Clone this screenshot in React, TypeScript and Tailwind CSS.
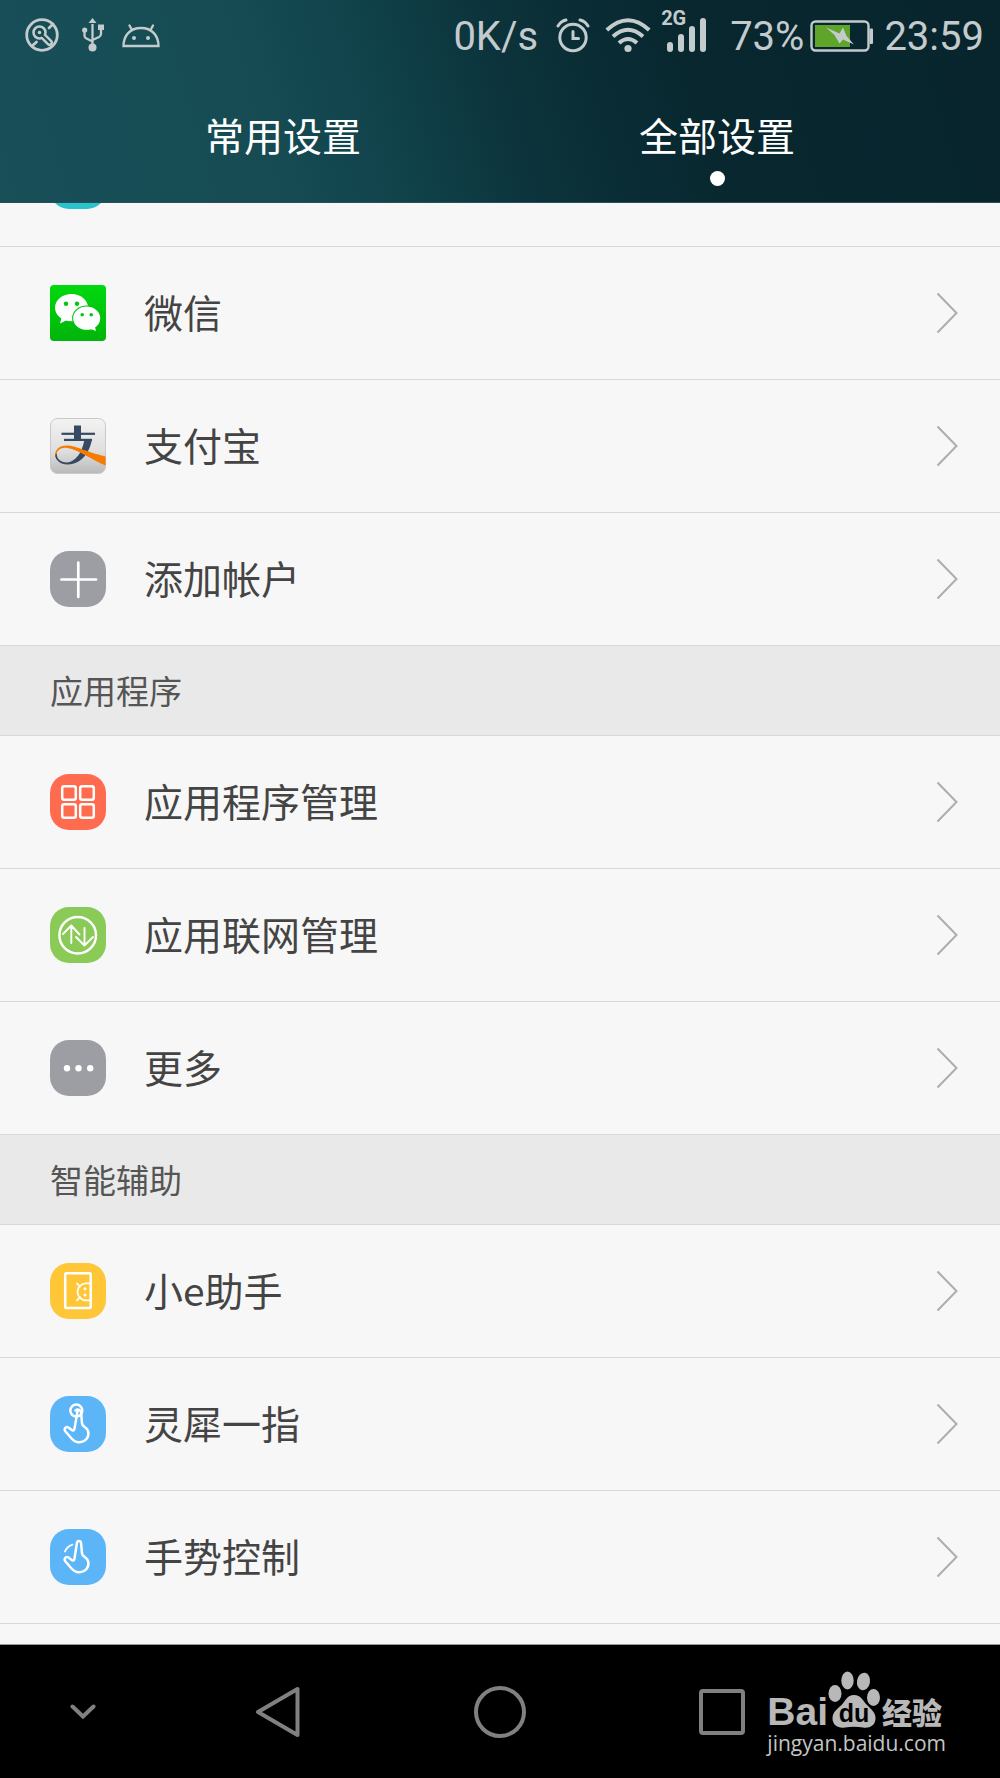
import type { ReactNode } from 'react'

type Row = {
  label: string
  icon: ReactNode
}

type Section = {
  title?: string
  rows: Row[]
}

const Tile = ({ className, children }: { className: string; children?: ReactNode }) => (
  <span className={`${className} size-14 shrink-0 rounded-[19px] overflow-hidden text-white`}>
    <svg viewBox="0 0 56 56" className="size-full" fill="none" stroke="currentColor" strokeWidth="2.5" strokeLinecap="round" strokeLinejoin="round">
      {children}
    </svg>
  </span>
)

const WeChatIcon = () => (
  <svg viewBox="0 0 56 56" className="size-14 shrink-0">
    <defs>
      <linearGradient id="wechat" x1="0" y1="0" x2="0" y2="1">
        <stop offset="0" stopColor="#00d90f" />
        <stop offset="1" stopColor="#00b40b" />
      </linearGradient>
    </defs>
    <rect width="56" height="56" rx="4" fill="url(#wechat)" />
    <path d="M12 31 L10 38.5 L18 34.5 Z" fill="#fff" />
    <ellipse cx="21.5" cy="22.7" rx="16.5" ry="13.6" fill="#fff" />
    <ellipse cx="36.7" cy="33.2" rx="14.6" ry="12.7" fill="#00c20c" />
    <ellipse cx="36.7" cy="33.2" rx="13.5" ry="11.6" fill="#fff" />
    <path d="M39 43.5 L46 46 L44.5 40 Z" fill="#fff" />
    <g fill="#00c80c">
      <circle cx="16" cy="18.8" r="2.2" />
      <circle cx="27" cy="18.8" r="2.2" />
      <circle cx="32.2" cy="29.8" r="1.8" />
      <circle cx="41.2" cy="29.8" r="1.8" />
    </g>
  </svg>
)

const AlipayIcon = () => (
  <svg viewBox="0 0 56 56" className="size-14 shrink-0">
    <defs>
      <linearGradient id="alipay" x1="0" y1="0" x2="0" y2="1">
        <stop offset="0" stopColor="#f3f3f3" />
        <stop offset="0.6" stopColor="#dedede" />
        <stop offset="1" stopColor="#b9b9b9" />
      </linearGradient>
    </defs>
    <rect x="0.5" y="0.5" width="55" height="55" rx="7" fill="url(#alipay)" stroke="#c9c9c9" />
    <g fill="#364a63">
      <rect x="11.5" y="14.7" width="33.5" height="2.2" />
      <rect x="24" y="7.5" width="7" height="14" />
      <rect x="14" y="20.8" width="28" height="2.2" />
      <path d="M34.5 21.5 H42 C40 31 36 38 30 42.5 C23 47.5 12 48 7.5 42.5 C5.5 40 4.5 37.5 5.2 35 L7 35.5 C6.5 38 7.5 40.5 10 42.5 C15 46 22 44.5 26 40 C30.5 36 33 29 34.5 21.5 Z" />
    </g>
    <path d="M5 37.5 C5 31.5 9.5 27.5 16.5 27.5 C26 27.5 35 33.5 55.5 38.5 V47.5 C42 42 29 32 17.5 30 C11 29 7 32 6.3 37 Z" fill="#f57c00" />
  </svg>
)

const handPath = 'L24.5 32.5 Q24 35.5 21.7 34 L18.5 31.5 C15.5 30 13.5 33 15.5 35.5 L22 43 C25 46.5 30 47.3 34 45 C39 42 39.3 36.5 37.3 33.5 C35.5 30.8 32.4 30.5 32 27.5'

const sections: Section[] = [
  {
    rows: [
      { label: '微信', icon: <WeChatIcon /> },
      { label: '支付宝', icon: <AlipayIcon /> },
      {
        label: '添加帐户',
        icon: (
          <Tile className="bg-[#9d9ea4]">
            <path d="M11.5 28.5 H46 M28.3 11.5 V46" strokeWidth="2.7" />
          </Tile>
        ),
      },
    ],
  },
  {
    title: '应用程序',
    rows: [
      {
        label: '应用程序管理',
        icon: (
          <Tile className="bg-[#ff6b4f]">
            <rect x="12.2" y="12.2" width="13.6" height="13.6" rx="2" />
            <rect x="30.2" y="12.2" width="13.6" height="13.6" rx="2" />
            <rect x="12.2" y="30.2" width="13.6" height="13.6" rx="2" />
            <rect x="30.2" y="30.2" width="13.6" height="13.6" rx="2" />
          </Tile>
        ),
      },
      {
        label: '应用联网管理',
        icon: (
          <Tile className="bg-[#8aca57]">
            <circle cx="27.7" cy="28.3" r="18.3" />
            <path d="M21.3 36 V18.5 M13 27 L21.3 18.5 L29.5 27.5 M34.5 21 V38.5 M26 30 L34.5 38.5 L43 30" strokeWidth="1.9" />
          </Tile>
        ),
      },
      {
        label: '更多',
        icon: (
          <Tile className="bg-[#9d9ea4]">
            <g fill="currentColor" stroke="none">
              <circle cx="17" cy="28.3" r="3.2" />
              <circle cx="28.5" cy="28.3" r="3.2" />
              <circle cx="40.2" cy="28.3" r="3.2" />
            </g>
          </Tile>
        ),
      },
    ],
  },
  {
    title: '智能辅助',
    rows: [
      {
        label: '小e助手',
        icon: (
          <Tile className="bg-[#ffc637]">
            <rect x="15.2" y="10.3" width="25.5" height="34.8" rx="1" />
            <path d="M39.5 20.3 H36 A8.5 8.5 0 0 0 36 37.3 H39.5 M27 20.5 L30 23.7 M27 37.3 L30 34" strokeWidth="1.8" />
            <circle cx="35" cy="25.7" r="1.5" fill="currentColor" stroke="none" />
            <circle cx="35" cy="32" r="1.5" fill="currentColor" stroke="none" />
          </Tile>
        ),
      },
      {
        label: '灵犀一指',
        icon: (
          <Tile className="bg-[#5bb5f7]">
            <circle cx="26.3" cy="14.6" r="6" />
            <path d={`M27.5 15.5 ${handPath} L31 15.5 M25.5 14.5 Q28 12.5 30.5 15`} />
          </Tile>
        ),
      },
      {
        label: '手势控制',
        icon: (
          <Tile className="bg-[#5bb5f7]">
            <g transform="translate(0 -3)">
              <path d={`M27 16.5 ${handPath} L31 16.5 C30.5 14.5 27.5 14.5 27 16.5`} />
              <path d="M15 25.5 Q17 20.5 22.5 18.7" strokeWidth="1.8" />
            </g>
          </Tile>
        ),
      },
    ],
  },
]

const StatusBar = () => (
  <div className="flex h-18 items-center justify-between pl-6 pr-4 font-[Roboto,sans-serif] text-[40px] leading-none text-[#c3cbcd]">
    <div className="flex items-center gap-5">
      <svg viewBox="0 0 36 36" className="size-9" fill="none" stroke="currentColor" strokeLinecap="round">
        <circle cx="18" cy="17" r="15.3" strokeWidth="2.8" />
        <path d="M20.5 19.5 L25.5 24.5" strokeWidth="6.8" />
        <circle cx="15.5" cy="14.5" r="6" strokeWidth="2.5" fill="#164b53" />
        <path d="M18.5 17.5 L25.5 24.5" strokeWidth="2" stroke="#164b53" />
        <circle cx="15.5" cy="14.5" r="1.8" fill="currentColor" stroke="none" />
        <path d="M8 28 L12.5 24 M25 10 L29 6" strokeWidth="2.8" />
      </svg>
      <svg viewBox="0 0 24 36" className="h-9 w-6" fill="none" stroke="currentColor" strokeWidth="2.3">
        <path d="M12.5 6 V30 M4.5 12 V17.5 Q4.5 19.5 6.5 20.5 L12.5 23.5 M21 11 V16 Q21 18 19 19 L12.5 22" />
        <g fill="currentColor" stroke="none">
          <path d="M12.5 0 L16.5 5 H8.5 Z" />
          <circle cx="4.7" cy="12" r="2.6" />
          <rect x="18" y="6.5" width="6" height="5.5" />
          <circle cx="12.5" cy="29.5" r="4" />
        </g>
      </svg>
      <svg viewBox="0 0 38 36" className="-ml-0.5 h-9 w-[38px]" fill="none" stroke="currentColor" strokeWidth="2.4" strokeLinecap="round">
        <path d="M1.5 28 C1.5 17.5 8 10 19 10 C30 10 36.5 17.5 36.5 28 Z M10 12 L7.5 7.5 M28.5 12 L31 7.5" />
        <circle cx="12" cy="20" r="2" fill="currentColor" stroke="none" />
        <circle cx="26" cy="20" r="2" fill="currentColor" stroke="none" />
      </svg>
    </div>
    <div className="flex items-center">
      <span className="pt-0.5">0K/s</span>
      <svg viewBox="0 0 34 36" className="ml-[18px] h-9 w-[34px]" fill="none" stroke="currentColor" strokeWidth="3" strokeLinecap="round">
        <circle cx="17" cy="19.5" r="13.2" />
        <path d="M17 13.5 V20.5 H22.5 M2 8 Q5 3 10 2 M32 8 Q29 3 24 2" />
      </svg>
      <svg viewBox="0 0 46 36" className="ml-[15px] h-9 w-[46px]" fill="none" stroke="currentColor" strokeWidth="4">
        <path d="M1.8 12 Q23 -7.5 44.2 12 M8 18.5 Q23 5 38 18.5 M14 25 Q23 17 32 25" />
        <circle cx="23" cy="30.5" r="3.6" fill="currentColor" stroke="none" />
      </svg>
      <div className="relative ml-4 flex h-9 items-end gap-[5px] pb-0.5">
        <span className="absolute -top-2.5 -left-1.5 text-[20px] font-bold leading-5">2G</span>
        <span className="h-2.5 w-1.5 rounded-sm bg-[#c3cbcd]" />
        <span className="h-[18px] w-1.5 rounded-sm bg-[#c3cbcd]" />
        <span className="h-[26px] w-1.5 rounded-sm bg-[#c3cbcd]" />
        <span className="h-[34px] w-1.5 rounded-sm bg-[#c3cbcd]" />
      </div>
      <span className="ml-6 pt-0.5">73%</span>
      <svg viewBox="0 0 64 36" className="ml-1.5 h-9 w-16">
        <rect x="1.5" y="3.5" width="57" height="29" rx="4" fill="none" stroke="currentColor" strokeWidth="2.4" />
        <rect x="59.5" y="10.5" width="3.5" height="15.5" rx="1" fill="currentColor" />
        <rect x="5" y="7" width="35" height="22" fill="#5fa52a" />
        <path d="M16 9.5 L29.5 15.5 L33 9.5 L36.5 18 L44 26.5 L33 21.5 L29.5 25.5 L24.5 17 Z" fill="currentColor" />
      </svg>
      <time className="ml-2.5 pt-0.5">23:59</time>
    </div>
  </div>
)

const SettingsRow = ({ label, icon }: Row) => (
  <li className="border-b border-[#d8d8d8]">
    <a href="#" className="flex h-[132px] items-center gap-[38px] pl-[50px] pr-10">
      {icon}
      <span className="flex-1 pb-1 text-[39px] leading-none">{label}</span>
      <svg viewBox="0 0 24 42" className="h-[42px] w-6" fill="none" stroke="#adadad" strokeWidth="2">
        <path d="M1.5 1.5 L20.5 21 L1.5 40.5" />
      </svg>
    </a>
  </li>
)

const NavBar = () => (
  <nav className="relative grid h-[134px] grid-cols-[3fr_4fr_4fr_4fr_3fr] border-t border-[#999] bg-black text-[#808080]">
    <button aria-label="收起" className="flex items-center justify-center">
      <svg viewBox="0 0 26 18" className="h-[18px] w-[26px]" fill="none" stroke="currentColor" strokeWidth="4" strokeLinecap="round">
        <path d="M2.5 3.5 L13 13.5 L23.5 3.5" />
      </svg>
    </button>
    <button aria-label="返回" className="flex items-center justify-center">
      <svg viewBox="0 0 46 52" className="h-[52px] w-[46px]" fill="none" stroke="currentColor" strokeWidth="4" strokeLinejoin="round">
        <path d="M42.5 3 V49 L3 26 Z" />
      </svg>
    </button>
    <button aria-label="主屏幕" className="flex items-center justify-center">
      <span className="size-[52px] rounded-full border-4 border-current" />
    </button>
    <button aria-label="最近任务" className="flex items-center justify-center">
      <span className="size-[46px] rounded-sm border-4 border-current" />
    </button>

    {/* Baidu Jingyan mark */}
    <div className="absolute right-[54px] top-[26px] flex flex-col text-[#b8b8b8]">
      <div className="flex h-[58px] items-end">
        <span className="font-['Liberation_Sans',sans-serif] text-[39px] font-bold leading-[34px]">Bai</span>
        <svg viewBox="0 0 54 58" className="h-[58px] w-[54px]">
          <g fill="currentColor">
            <ellipse cx="7" cy="22.5" rx="6.5" ry="8.5" />
            <ellipse cx="19.5" cy="9.5" rx="6.2" ry="9" />
            <ellipse cx="35.5" cy="10.5" rx="6.5" ry="8.8" transform="rotate(10 35.5 10.5)" />
            <ellipse cx="45.5" cy="26.5" rx="6.5" ry="8.5" />
            <path d="M26 24 C33 24 35 30 39 34 C44 39 48 42 47.5 48 C47 55 41 57.5 35 56.5 C29 55.5 23 55.5 17 56.5 C10 57.5 4.5 54 4.5 47.5 C4.5 41 9 38.5 13.5 34 C17.5 30 19 24 26 24 Z" />
          </g>
          <text x="26" y="51" textAnchor="middle" fontSize="25" fontWeight="700" fontFamily="Liberation Sans, sans-serif" fill="#000">du</text>
        </svg>
        <span className="text-[30px] font-black leading-9">经验</span>
      </div>
      <span className="font-['Open_Sans',sans-serif] text-[21px] leading-7 text-[#c4c4c4]">jingyan.baidu.com</span>
    </div>
  </nav>
)

const App = () => (
  <div className="flex min-h-screen flex-col bg-[#f7f7f7] font-['Noto_Sans_CJK_SC',sans-serif] text-[#444]">
    <header className="flex h-[203px] flex-col border-b border-[#2b4f57] bg-[linear-gradient(74deg,#184f58_0%,#164b53_28%,#10424a_39%,#0c333b_51%,#08272f_69%,#08252e_100%)]">
      <StatusBar />
      <div className="flex flex-1 px-[66px] text-[39px] text-white">
        <button className="flex flex-1 flex-col items-center pt-10 leading-11">常用设置</button>
        <button className="flex flex-1 flex-col items-center gap-[15px] pt-10 leading-11">
          全部设置
          <span className="size-[15px] rounded-full bg-white" />
        </button>
      </div>
    </header>

    <main className="flex-1">
      {/* account row scrolled under the header */}
      <div className="flex h-11 flex-col justify-end overflow-hidden border-b border-[#d8d8d8] pb-[37px] pl-[50px]">
        <Tile className="bg-[#2bc3cb]" />
      </div>
      {sections.map((section, index) => (
        <section key={index}>
          {section.title && (
            <h2 className="flex h-[90px] items-center border-b border-[#d8d8d8] bg-[#e9e9e9] pl-[50px] text-[33px] leading-none text-[#555]">
              {section.title}
            </h2>
          )}
          <ul>
            {section.rows.map((row) => (
              <SettingsRow key={row.label} {...row} />
            ))}
          </ul>
        </section>
      ))}
    </main>

    <NavBar />
  </div>
)

export default App
